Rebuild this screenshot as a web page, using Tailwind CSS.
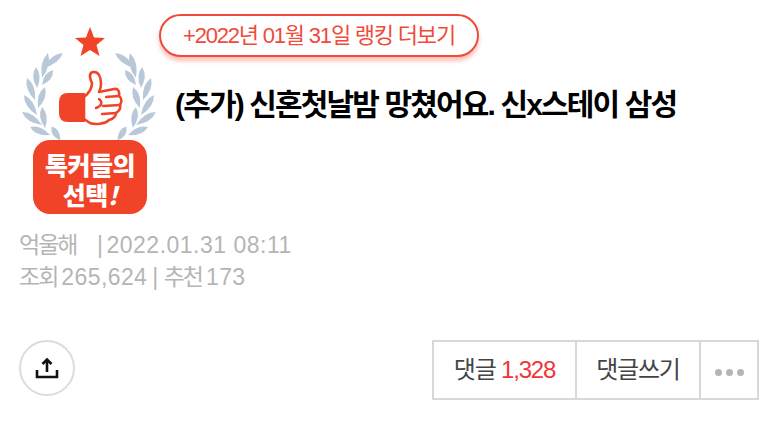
<!DOCTYPE html>
<html lang="ko">
<head>
  <meta charset="UTF-8" />
  <title>톡커들의 선택</title>
  <script src="https://cdn.jsdelivr.net/npm/@tailwindcss/browser@4"></script>
</head>
<body class="bg-white font-['Liberation_Sans','Noto_Sans_CJK_KR',sans-serif] w-[777px] h-[425px] overflow-hidden">
  <div class="pl-[19px] pr-[18px] pt-[14px]">
    <!-- 상단: 로고 + 제목 -->
    <div class="flex items-start h-[215px]">
      <svg class="w-[136px] h-[200px] ml-[1px] mt-[6px] shrink-0" viewBox="20 20 136 200">
        <defs>
          <g id="laurel" fill="#b9c8d8">
            <path d="M0 -12 Q6.5 -2 0 12 Q-6.5 -2 0 -12" transform="translate(53 60.5) rotate(53) scale(1 1.04)" />
            <path d="M0 -12 Q6.5 -2 0 12 Q-6.5 -2 0 -12" transform="translate(45 65.5) rotate(13.5) scale(1 1.07)" />
            <path d="M0 -12 Q6.5 -2 0 12 Q-6.5 -2 0 -12" transform="translate(36.5 77.5) rotate(-3) scale(1 .88)" />
            <path d="M0 -12 Q6.5 -2 0 12 Q-6.5 -2 0 -12" transform="translate(47.5 77.5) rotate(36) scale(1 .78)" />
            <path d="M0 -12 Q6.5 -2 0 12 Q-6.5 -2 0 -12" transform="translate(31 89) rotate(-20) scale(1 .98)" />
            <path d="M0 -12 Q6.5 -2 0 12 Q-6.5 -2 0 -12" transform="translate(41.5 97.5) rotate(18) scale(1 .92)" />
            <path d="M0 -12 Q6.5 -2 0 12 Q-6.5 -2 0 -12" transform="translate(30.5 105) rotate(-33) scale(1 1)" />
            <path d="M0 -12 Q6.5 -2 0 12 Q-6.5 -2 0 -12" transform="translate(43.5 117.5) rotate(-8) scale(1 .88)" />
            <path d="M0 -12 Q6.5 -2 0 12 Q-6.5 -2 0 -12" transform="translate(32 118.5) rotate(-57) scale(1 1)" />
            <path d="M0 -12 Q6.5 -2 0 12 Q-6.5 -2 0 -12" transform="translate(40 131) rotate(-68) scale(1 .9)" />
            <path d="M0 -12 Q6.5 -2 0 12 Q-6.5 -2 0 -12" transform="translate(56 133.5) rotate(-32) scale(1 .7)" />
          </g>
        </defs>
        <use href="#laurel" />
        <use href="#laurel" transform="translate(178 0) scale(-1 1)" />
        <!-- 별 -->
        <path d="M90 27 L94 37.5 L105 38 L96.5 45 L99.5 56 L90 50 L80.5 56 L83.5 45 L75 38 L86 37.5 Z" fill="#f04328" />
        <!-- 엄지 -->
        <path d="M68 93 H85 V122 H68 Q59 122 59 113 V102 Q59 93 68 93 Z" fill="#f04328" />
        <path d="M84 97 C89 93 92 88 92 83 C89 77 89 72 94 72 C99 72 101 78 101 84 C101 87 100 90 99 92 L114 89 C118 88 120 92 119 96 C122 98 122 102 120 105 C121 108 119 111 116 113 C116 116 113 119 109 120 C105 124 95 125 90 123 L84 119 Z" fill="#fff" stroke="#f04328" stroke-width="2.6" stroke-linejoin="round" />
        <path d="M106 97 L119 96 M103 106 L120 105 M102 114 L116 113 M99 99 C103 102 102 106 96 108" fill="none" stroke="#f04328" stroke-width="2.4" stroke-linecap="round" />
        <!-- 배지 -->
        <rect x="33" y="140" width="114" height="74" rx="17" fill="#f04328" />
        <text x="90" y="175" text-anchor="middle" fill="#fff" class="font-['Noto_Sans_CJK_KR',sans-serif] text-[25px] font-black tracking-[-0.5px]">톡커들의</text>
        <text x="90" y="205" text-anchor="middle" fill="#fff" class="font-['Noto_Sans_CJK_KR',sans-serif] text-[25px] font-black tracking-[-0.5px]">선택<tspan class="italic">!</tspan></text>
      </svg>

      <div class="ml-[4px] flex-1">
        <a class="-ml-[1px] flex items-center justify-center w-[320px] h-[43px] rounded-full border-2 border-[#f04a3a] shadow-[0_4px_4px_rgba(240,74,58,0.35)] text-[22px] tracking-[-1.2px] text-[#f04a3a]">+2022년 01월 31일 랭킹 더보기</a>
        <h1 class="ml-[15px] mt-[28px] text-[30px] leading-[40px] font-bold tracking-[-1.85px] text-black whitespace-nowrap">(추가) 신혼첫날밤 망쳤어요. 신x스테이 삼성</h1>
      </div>
    </div>

    <!-- 작성자 정보 -->
    <div class="text-[23px] leading-[32px] text-[#b5b5b5] tracking-[0.5px] h-[111px]">
      <p class="flex"><span class="w-[78px] tracking-[-2px]">억울해</span><span class="mr-[3px]">|</span><span>2022.01.31 08:11</span></p>
      <p class="flex tracking-[0.4px]"><span class="tracking-[-2px]">조회</span><span class="ml-[4px]">265,624</span><span class="ml-[5px]">|</span><span class="ml-[5px] tracking-[-2px]">추천</span><span class="ml-[4px]">173</span></p>
    </div>

    <!-- 하단 버튼 -->
    <div class="flex items-start justify-between">
      <button class="flex items-center justify-center w-[56px] h-[56px] rounded-full border-2 border-[#dcdcdc]">
        <svg class="w-[24px] h-[24px]" viewBox="0 0 24 24" fill="none" stroke="#111" stroke-width="2.6">
          <path d="M12 16 V3.5 M7.5 8 L12 3.5 L16.5 8" />
          <path d="M2 14 V21 H22 V14" />
        </svg>
      </button>
      <div class="flex h-[60px] border-2 border-[#d8d8d8] text-[24px] tracking-[-1.2px] text-[#444]">
        <button class="w-[143px] border-r-2 border-[#d8d8d8]">댓글 <span class="text-[#f0353a]">1,328</span></button>
        <button class="w-[124px] border-r-2 border-[#d8d8d8]">댓글쓰기</button>
        <button class="w-[56px] pt-[5px] flex items-center justify-center gap-[4px]">
          <i class="w-[7px] h-[7px] rounded-full bg-[#b5b5b5]"></i>
          <i class="w-[7px] h-[7px] rounded-full bg-[#b5b5b5]"></i>
          <i class="w-[7px] h-[7px] rounded-full bg-[#b5b5b5]"></i>
        </button>
      </div>
    </div>
  </div>
</body>
</html>
